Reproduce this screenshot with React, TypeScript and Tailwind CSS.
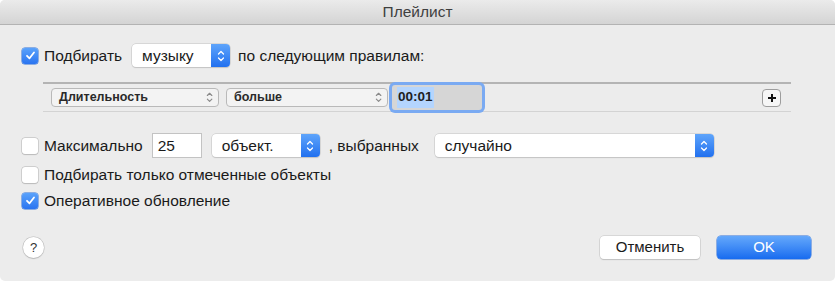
import React from 'react';

const font = { fontFamily: '"Liberation Sans", Arial, sans-serif' };

const Checkbox: React.FC<{ checked?: boolean }> = ({ checked }) =>
  checked ? (
    <span className="flex h-[16px] w-[16px] shrink-0 items-center justify-center rounded-[3px] bg-gradient-to-b from-[#5aa2fb] to-[#2a74f0] shadow-[0_0_0_0.5px_#2b6fd8]">
      <svg width="11" height="11" viewBox="0 0 11 11">
        <path d="M2 5.8 L4.5 8.3 L9 2.5" fill="none" stroke="#fff" strokeWidth="1.8" strokeLinecap="round" strokeLinejoin="round" />
      </svg>
    </span>
  ) : (
    <span className="h-[16px] w-[16px] shrink-0 rounded-[3px] bg-white shadow-[0_0_0_0.5px_#b5b5b5,0_0.5px_1px_#c4c4c4]" />
  );

const Chevrons: React.FC<{ color: string; size?: number }> = ({ color, size = 10 }) => (
  <svg width={size * 0.8} height={size * 1.4} viewBox="0 0 8 14">
    <path d="M1.5 5 L4 2.5 L6.5 5 M1.5 9 L4 11.5 L6.5 9" fill="none" stroke={color} strokeWidth="1.3" strokeLinecap="round" strokeLinejoin="round" />
  </svg>
);

const BlueSelect: React.FC<{ label: string; className: string }> = ({ label, className }) => (
  <div className={`flex h-[23px] items-stretch overflow-hidden rounded-[4px] bg-white shadow-[0_0_0_0.5px_#c2c2c2,0_1px_1px_#c8c8c8] ${className}`}>
    <span className="flex flex-1 items-center pl-[10px] text-[15.5px] text-[#1a1a1a]">{label}</span>
    <span className="flex w-[19px] items-center justify-center bg-gradient-to-b from-[#5ea4fb] to-[#2170ef]">
      <Chevrons color="#fff" />
    </span>
  </div>
);

const SmallSelect: React.FC<{ label: string; className: string }> = ({ label, className }) => (
  <div className={`flex h-[19px] items-center justify-between rounded-[4px] border border-[#b9b9b9] bg-[#f3f3f3] pl-[7px] pr-[5px] ${className}`}>
    <span className="text-[12.5px] font-bold text-[#2a2a2a]">{label}</span>
    <Chevrons color="#8a8a8a" size={9} />
  </div>
);

export default function App() {
  return (
    <div className="h-[281px] w-[835px] bg-white" style={font}>
      <div className="flex h-full flex-col overflow-hidden rounded-[5px] bg-[#ececec]">
        {/* title bar */}
        <div className="flex h-[25px] shrink-0 items-center justify-center border-b border-[#b3b3b3] bg-gradient-to-b from-[#ebebeb] to-[#d4d4d4]">
          <span className="text-[15.5px] text-[#3f3f3f]">Плейлист</span>
        </div>

        <div className="flex flex-col px-[22px]">
          {/* match row */}
          <div className="mt-[19px] flex h-[23px] items-center">
            <Checkbox checked />
            <span className="ml-[6px] text-[15.5px] text-[#1a1a1a]">Подбирать</span>
            <BlueSelect label="музыку" className="ml-[10px] w-[98px]" />
            <span className="ml-[8px] text-[15.5px] text-[#1a1a1a]">по следующим правилам:</span>
          </div>

          {/* rules box */}
          <div className="ml-[21px] mr-[22px] mt-[15px] flex h-[30px] items-center border-b border-t-2 border-b-[#d3d3d3] border-t-[#b4b4b4] pl-[8px] pr-[10px]">
            <SmallSelect label="Длительность" className="w-[168px]" />
            <SmallSelect label="больше" className="ml-[7px] w-[162px]" />
            <div className="ml-[4px] flex h-[25px] w-[90px] items-center rounded-[3px] bg-[#d6d6d6] pl-[5px] shadow-[0_0_0_3px_#7aaaf2]">
              <span className="bg-[#b4d5fe] px-[1px] text-[13.5px] font-bold text-[#1e1e1e]">00:01</span>
            </div>
            <div className="ml-auto flex h-[18px] w-[19px] items-center justify-center rounded-[4px] border border-[#9d9d9d] bg-[#f6f6f6]">
              <svg width="10" height="10" viewBox="0 0 10 10">
                <path d="M5 1 V9 M1 5 H9" stroke="#111" strokeWidth="2" />
              </svg>
            </div>
          </div>

          {/* limit row */}
          <div className="mt-[21px] flex h-[25px] items-center">
            <Checkbox />
            <span className="ml-[6px] text-[15.5px] text-[#1a1a1a]">Максимально</span>
            <div className="ml-[9px] flex h-[25px] w-[50px] items-center border border-[#c3c3c3] bg-white pl-[5px] text-[15.5px] text-[#1a1a1a]">25</div>
            <BlueSelect label="объект." className="ml-[10px] w-[108px]" />
            <span className="ml-[9px] text-[15.5px] text-[#1a1a1a]">, выбранных</span>
            <BlueSelect label="случайно" className="ml-[16px] w-[279px]" />
          </div>

          <div className="mt-[4px] flex h-[25px] items-center">
            <Checkbox />
            <span className="ml-[6px] text-[15.5px] text-[#1a1a1a]">Подбирать только отмеченные объекты</span>
          </div>

          <div className="mt-[1px] flex h-[25px] items-center">
            <Checkbox checked />
            <span className="ml-[6px] text-[15.5px] text-[#1a1a1a]">Оперативное обновление</span>
          </div>

          {/* buttons */}
          <div className="mt-[23px] flex items-center">
            <div className="ml-[1px] flex h-[21px] w-[21px] items-center justify-center rounded-full bg-white text-[13px] text-[#333] shadow-[0_0_0_0.5px_#bdbdbd,0_1px_1px_#bcbcbc]">?</div>
            <div className="ml-auto flex h-[23px] w-[100px] items-center justify-center rounded-[4px] bg-white text-[15px] text-[#1a1a1a] shadow-[0_0_0_0.5px_#c2c2c2,0_1px_1px_#c2c2c2]">Отменить</div>
            <div className="ml-[17px] mr-[2px] flex h-[23px] w-[94px] items-center justify-center rounded-[4px] bg-gradient-to-b from-[#64a8fb] to-[#166bef] text-[15px] text-white shadow-[0_0_0_0.5px_#2c6fd9]">OK</div>
          </div>
        </div>
      </div>
    </div>
  );
}
